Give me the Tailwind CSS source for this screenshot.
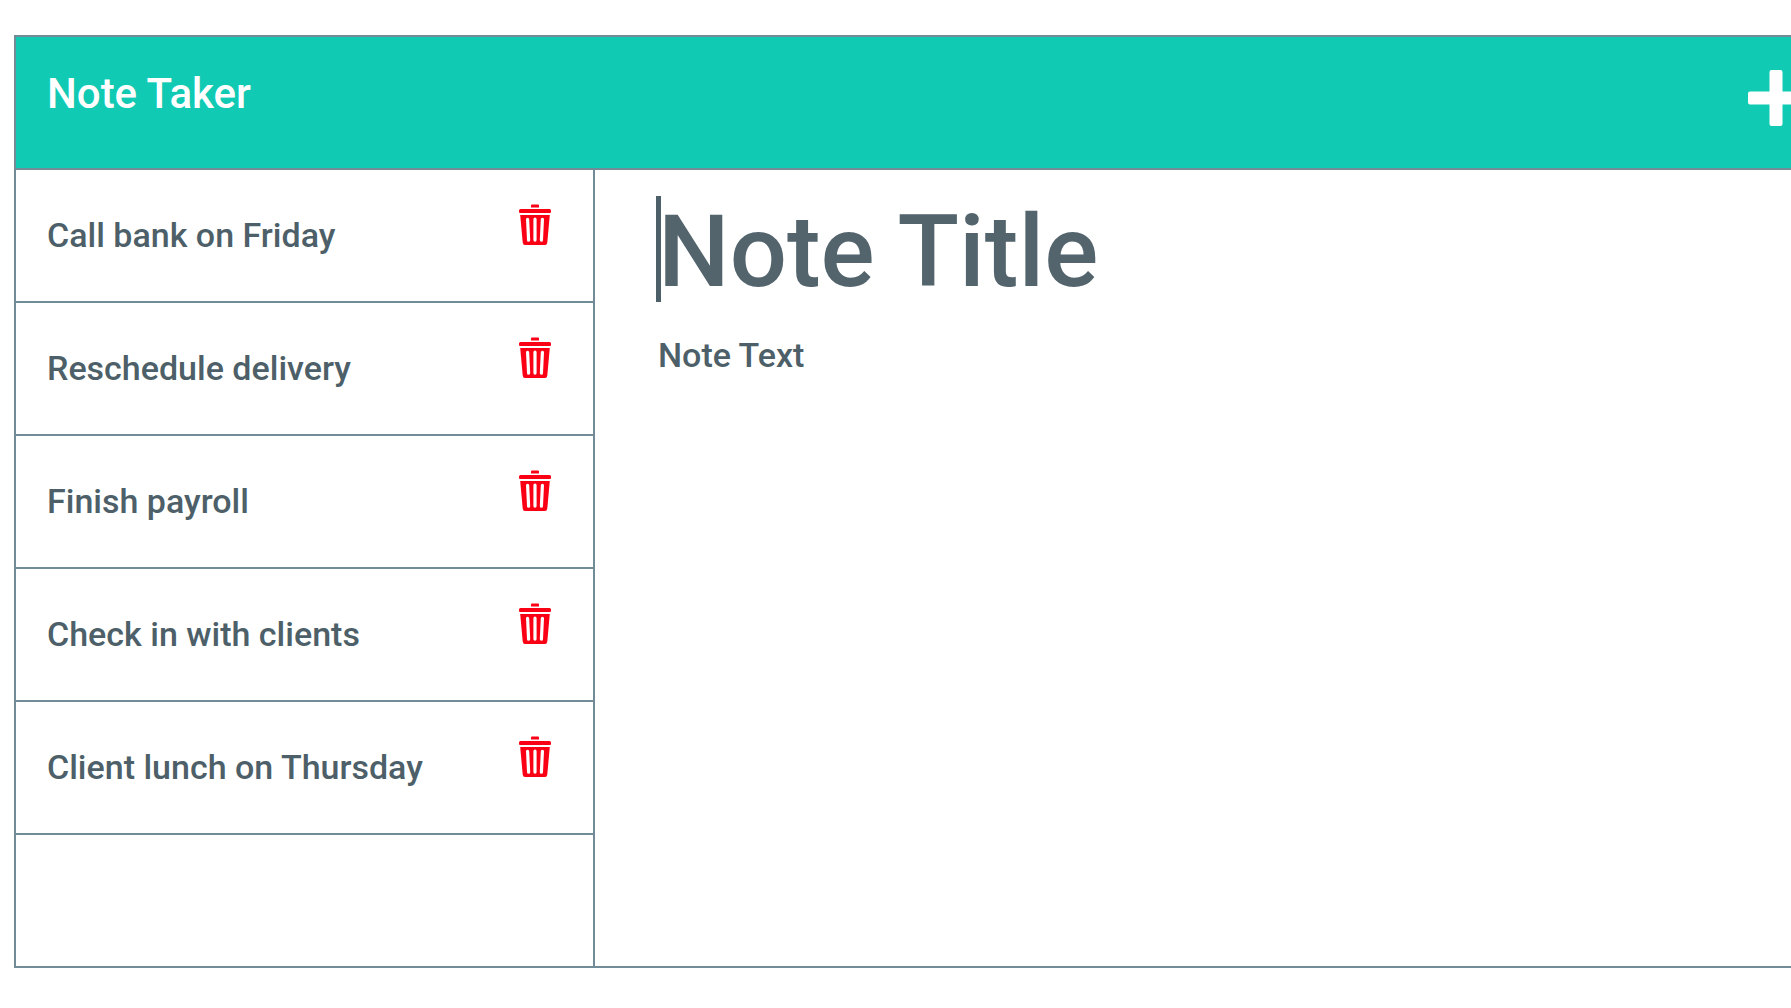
<!DOCTYPE html>
<html lang="en">
<head>
<meta charset="utf-8">
<meta name="viewport" content="width=device-width, initial-scale=1">
<title>Note Taker</title>
<script src="https://cdn.jsdelivr.net/npm/@tailwindcss/browser@4"></script>
</head>
<body class="bg-white font-['Roboto',sans-serif] font-medium text-[#4d5f68]">
<svg class="hidden" aria-hidden="true">
  <symbol id="trash" viewBox="0 0 32 41">
    <path d="M12 3.500V1.500Q12 .5 13 .5h6q1 0 1 1v2zM0 8V6.500Q0 5 1.500 5h29Q32 5 32 6.500V8q0 1-1 1H1Q0 9 0 8z"/>
    <path fill-rule="evenodd" d="M1.200 11h29.600L28.300 38.500Q28 41 26 41H6Q4 41 3.700 38.500zM7 15.300l1 20.900a1.600 1.600 0 0 0 3.200-.1L10.200 15.200a1.600 1.600 0 0 0-3.200.1zM14.400 15.200v20.900a1.600 1.600 0 0 0 3.200 0V15.200a1.600 1.600 0 0 0-3.200 0zM21.800 15.200l-1 20.900a1.600 1.600 0 0 0 3.200.1l1-20.900a1.600 1.600 0 0 0-3.200-.1z"/>
  </symbol>
</svg>
<div class="overflow-hidden pt-[35px] pb-10 pl-3.5">
  <div class="border-y-2 border-l-2 border-[#718b97]">
    <header class="-mr-[13px] flex h-[133px] items-start justify-between border-b-2 border-[#718b97] bg-[#11cab4] pl-[31px] text-white">
      <h1 class="pt-8 text-[42px] leading-[50px]">Note Taker</h1>
      <button type="button" aria-label="New note" class="mt-[33px]">
        <svg class="size-14" viewBox="0 0 56 56" fill="currentColor" aria-hidden="true"><path d="M23.500 0h9q2 0 2 2v19.500H54q2 0 2 2v9q0 2-2 2H34.500V54q0 2-2 2h-9q-2 0-2-2V34.500H2q-2 0-2-2v-9q0-2 2-2h19.500V2q0-2 2-2z"/></svg>
      </button>
    </header>
    <main class="grid grid-cols-[579px_1fr]">
      <ul class="min-h-[796px] border-r-2 border-[#718b97]">
        <li class="flex h-[133px] items-start justify-between border-b-2 border-[#718b97] pr-[42px] pl-[31px]">
          <a href="#" class="pt-[45px] text-[34px] leading-10">Call bank on Friday</a>
          <button type="button" aria-label="Delete Call bank on Friday" class="mt-[34px]"><svg class="h-[41px] w-8 fill-[#fb0014]"><use href="#trash"/></svg></button>
        </li>
        <li class="flex h-[133px] items-start justify-between border-b-2 border-[#718b97] pr-[42px] pl-[31px]">
          <a href="#" class="pt-[45px] text-[34px] leading-10">Reschedule delivery</a>
          <button type="button" aria-label="Delete Reschedule delivery" class="mt-[34px]"><svg class="h-[41px] w-8 fill-[#fb0014]"><use href="#trash"/></svg></button>
        </li>
        <li class="flex h-[133px] items-start justify-between border-b-2 border-[#718b97] pr-[42px] pl-[31px]">
          <a href="#" class="pt-[45px] text-[34px] leading-10">Finish payroll</a>
          <button type="button" aria-label="Delete Finish payroll" class="mt-[34px]"><svg class="h-[41px] w-8 fill-[#fb0014]"><use href="#trash"/></svg></button>
        </li>
        <li class="flex h-[133px] items-start justify-between border-b-2 border-[#718b97] pr-[42px] pl-[31px]">
          <a href="#" class="pt-[45px] text-[34px] leading-10">Check in with clients</a>
          <button type="button" aria-label="Delete Check in with clients" class="mt-[34px]"><svg class="h-[41px] w-8 fill-[#fb0014]"><use href="#trash"/></svg></button>
        </li>
        <li class="flex h-[133px] items-start justify-between border-b-2 border-[#718b97] pr-[42px] pl-[31px]">
          <a href="#" class="pt-[45px] text-[34px] leading-10">Client lunch on Thursday</a>
          <button type="button" aria-label="Delete Client lunch on Thursday" class="mt-[34px]"><svg class="h-[41px] w-8 fill-[#fb0014]"><use href="#trash"/></svg></button>
        </li>
      </ul>
      <form class="flex flex-col pt-6 pl-[63px]">
        <div class="relative">
          <input type="text" aria-label="Note title" placeholder="Note Title" class="block h-[116px] w-full text-[101px] outline-none placeholder:text-[#53646d] placeholder:opacity-100">
          <span class="absolute top-0.5 -left-0.5 h-[106px] w-[5px] bg-[#4d5f68]" aria-hidden="true"></span>
        </div>
        <textarea aria-label="Note text" placeholder="Note Text" class="mt-[25px] grow resize-none text-[34px] leading-10 outline-none placeholder:text-[#4d5f68] placeholder:opacity-100"></textarea>
      </form>
    </main>
  </div>
</div>
</body>
</html>
